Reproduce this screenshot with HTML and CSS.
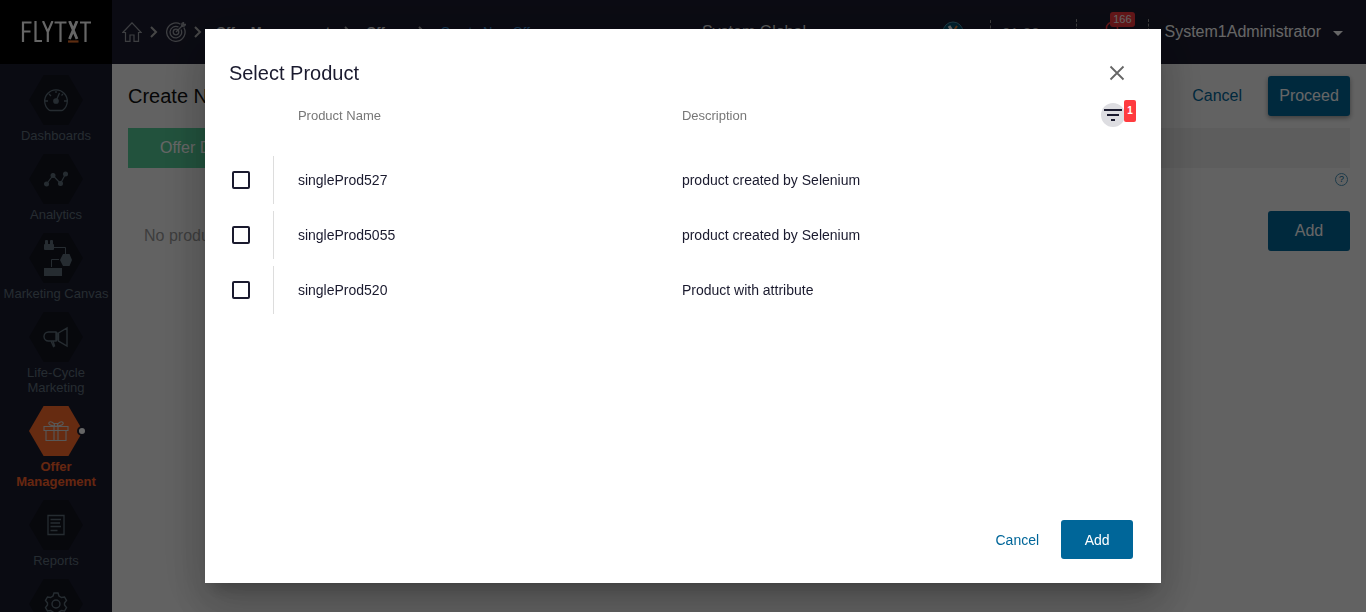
FILE: index.html
```
<!DOCTYPE html>
<html lang="en">
<head>
<meta charset="utf-8">
<meta name="viewport" content="width=device-width, initial-scale=1">
<title>Create New Offer</title>
<link rel="stylesheet" href="styles.css">
</head>
<body>
<div class="app">
  <aside class="sidebar">
    <a class="logo" href="#" aria-label="Flytxt">
      <svg width="70" height="22" viewBox="0 0 70 22" fill="none" stroke="currentColor" stroke-width="2.200">
        <path d="M2 21V1.500H10.500M2 10.500H9.500M14.500 0V20H21M22 0L26.800 11L31.500 0M26.800 11V21M33.500 1.500H45.500M39.500 1.500V21M59 1.500H70M64.500 1.500V21"/>
        <path d="M48.500 0L56 18M56 0L48.500 18" stroke-width="2.800"/>
        <path class="logo-bar" d="M47 20.500H57.500"/>
      </svg>
    </a>
    <nav class="menu">
      <a class="item" href="#"><span class="hex"><svg width="26" height="26" viewBox="0 0 26 26" fill="none" stroke="currentColor" stroke-width="1.300"><path d="M6 23A11.300 11.300 0 1 1 20 23Q19.500 23.500 18.500 23.500H7.500Q6.500 23.500 6 23ZM13 14L16.500 6M2 14H5M21 14H24M6 7L8 9M20 7L18.500 8.500M13 4V6"/><circle cx="13" cy="14" r="2.200" fill="currentColor"/></svg></span><span class="label">Dashboards</span></a>
      <a class="item" href="#"><span class="hex"><svg width="26" height="26" viewBox="0 0 26 26" fill="none" stroke="currentColor" stroke-width="1.200"><path d="M3.500 18L10 9.500L17.500 17.500L22.500 8"/><g fill="currentColor"><circle cx="3.500" cy="18" r="1.900"/><circle cx="10" cy="9.500" r="1.900"/><circle cx="17.500" cy="17.500" r="1.900"/><circle cx="22.500" cy="8" r="1.900"/></g></svg></span><span class="label">Analytics</span></a>
      <a class="item" href="#"><span class="hex"><svg width="32" height="38" viewBox="0 0 32 38" fill="none" stroke="currentColor" stroke-width="1"><path d="M13 8.500H25.500V15M19 20.500H11.500V28"/><g fill="currentColor" stroke="none"><rect x="4" y="5" width="10" height="6" rx="1"/><rect x="5" y="1" width="3" height="5" rx="1"/><rect x="10" y="1" width="3" height="5" rx="1"/><path d="M23 15H29.500L32 21L29.500 27H23L20 21Z"/><rect x="4" y="29" width="18" height="8"/></g></svg></span><span class="label">Marketing Canvas</span></a>
      <a class="item" href="#"><span class="hex"><svg width="26" height="22" viewBox="0 0 26 22" fill="none" stroke="currentColor" stroke-width="1.400"><path d="M13 6V15H5.500A4.500 4.500 0 0 1 5.500 6H13L14 7V14L13 15M15.500 7L24 2V20L15.500 15ZM8 15L10.500 20.500L11.500 20L10 15"/></svg></span><span class="label">Life-Cycle Marketing</span></a>
      <a class="item active" href="#"><span class="hex"><svg width="26" height="22" viewBox="0 0 26 22" fill="none" stroke="currentColor" stroke-width="1.100"><path d="M1 6.500H25V10.500H1ZM3 10.500V20.500H23V10.500M11 6.500V20.500M15 6.500V20.500M12 6C7 6 5 4 6 2.500C7.500 1 11 2 12 6ZM14 6C19 6 21 4 20 2.500C18.500 1 15 2 14 6ZM11 3.500H15"/></svg></span><span class="dot"></span><span class="label">Offer Management</span></a>
      <a class="item" href="#"><span class="hex"><svg width="18" height="22" viewBox="0 0 18 22" fill="none" stroke="currentColor" stroke-width="1.300"><path d="M1 1.500H17V20.500H1ZM3.500 5.500H14M3.500 9H13M3.500 12.500H14M3.500 16.500H10.500"/></svg></span><span class="label">Reports</span></a>
      <a class="item" href="#" aria-label="Settings"><span class="hex"><svg width="26" height="26" viewBox="0 0 26 26" fill="none" stroke="currentColor" stroke-width="1.400"><path d="M11 2H15L16 5L18.500 6.500L21.500 6L23.500 9.500L21.500 12V14L23.500 16.500L21.500 20L18.500 19.500L16 21L15 24H11L10 21L7.500 19.500L4.500 20L2.500 16.500L4.500 14V12L2.500 9.500L4.500 6L7.500 6.500L10 5Z"/><circle cx="13" cy="13" r="4"/></svg></span></a>
    </nav>
  </aside>
  <div class="page">
    <header class="topbar">
      <nav class="crumbs" aria-label="Breadcrumb">
        <a href="#" aria-label="Home"><svg width="20" height="20" viewBox="0 0 20 20" fill="none" stroke="currentColor" stroke-width="1.200"><path d="M.8 10.500L10 .8L19.200 10.500H16.500V19.300H12V13H8V19.300H3.500V10.500Z"/></svg></a>
        <svg class="chev" width="8" height="12" viewBox="0 0 8 12" fill="none" stroke="currentColor" stroke-width="2"><path d="M1 1L6 6L1 11"/></svg>
        <a href="#" aria-label="Campaigns"><svg width="20" height="20" viewBox="0 0 20 20" fill="none" stroke="currentColor" stroke-width="1.300"><path d="M14.500 2.200A9.200 9.200 0 1 0 17.800 5.500M12.500 5A5.800 5.800 0 1 0 15 7.500M10 10L18 2M15.500 4.500L16 1.500L17.500 .5V2.500H19.500L18.500 4L15.500 4.500"/><circle cx="10" cy="10" r="2.800"/></svg></a>
        <svg class="chev" width="8" height="12" viewBox="0 0 8 12" fill="none" stroke="currentColor" stroke-width="2"><path d="M1 1L6 6L1 11"/></svg>
        <a class="crumb" href="#">Offer Management</a>
        <svg class="chev" width="8" height="12" viewBox="0 0 8 12" fill="none" stroke="currentColor" stroke-width="2"><path d="M1 1L6 6L1 11"/></svg>
        <a class="crumb" href="#">Offers</a>
        <svg class="chev" width="8" height="12" viewBox="0 0 8 12" fill="none" stroke="currentColor" stroke-width="2"><path d="M1 1L6 6L1 11"/></svg>
        <a class="crumb current" href="#">Create New Offer</a>
      </nav>
      <div class="tools">
        <span class="tenant">System Global</span>
        <svg class="brand" width="22" height="22" viewBox="0 0 22 22"><circle cx="11" cy="11" r="10" fill="#00506e" stroke="#4a8fa8"/><path d="M7 5L15 17" stroke="#fff" stroke-width="3"/><path d="M15 5L7 17" stroke="#e8803c" stroke-width="2"/></svg>
        <span class="clock">01:20</span>
        <button class="bell" aria-label="Alerts"><svg width="20" height="20" viewBox="0 0 20 20" fill="none" stroke="currentColor" stroke-width="1.500"><path d="M1 14.500L3.500 12V6A5.500 5.500 0 0 1 14.500 6V12L17 14.500Z"/></svg><span class="count">166</span></button>
        <button class="user">System1Administrator<span class="caret"></span></button>
      </div>
    </header>
    <main class="content">
      <div class="title-row">
        <h1>Create New Offer</h1>
        <button class="btn text">Cancel</button>
        <button class="btn solid raised">Proceed</button>
      </div>
      <div class="steps"><button class="step">Offer Details</button></div>
      <div class="help-row"><button class="help" aria-label="Help">?</button></div>
      <div class="products"><p>No products added</p><button class="btn solid">Add</button></div>
    </main>
  </div>
</div>
<div class="overlay">
  <section class="dialog" role="dialog" aria-modal="true" aria-labelledby="dialog-title">
    <header class="dialog-head">
      <h2 id="dialog-title">Select Product</h2>
      <button class="close" aria-label="Close"><svg width="16" height="16" viewBox="0 0 16 16" fill="none" stroke="currentColor" stroke-width="1.800"><path d="M1.500 1.500L14.500 14.500M14.500 1.500L1.500 14.500"/></svg></button>
    </header>
    <div class="dialog-body">
      <table class="list">
        <colgroup><col class="col-check"><col class="col-name"><col><col class="col-filter"></colgroup>
        <thead>
          <tr><th></th><th scope="col">Product Name</th><th scope="col">Description</th><th><button class="filter" aria-label="Filter"><svg width="18" height="12" viewBox="0 0 18 12" fill="currentColor"><path d="M0 0H18V2H0ZM3 5H15V7H3ZM7 10H11V12H7Z"/></svg><span class="filter-count">1</span></button></th></tr>
        </thead>
        <tbody>
          <tr><td><div class="check"><input type="checkbox" id="p1"></div></td><td><label for="p1">singleProd527</label></td><td colspan="2">product created by Selenium</td></tr>
          <tr><td><div class="check"><input type="checkbox" id="p2"></div></td><td><label for="p2">singleProd5055</label></td><td colspan="2">product created by Selenium</td></tr>
          <tr><td><div class="check"><input type="checkbox" id="p3"></div></td><td><label for="p3">singleProd520</label></td><td colspan="2">Product with attribute</td></tr>
        </tbody>
      </table>
    </div>
    <footer class="dialog-foot">
      <button class="btn small text">Cancel</button>
      <button class="btn small solid">Add</button>
    </footer>
  </section>
</div>
</body>
</html>
```
FILE: styles.css
```
* { box-sizing: border-box; }
body { margin: 0; overflow: hidden; font-family: "Liberation Sans", Arial, sans-serif; font-size: 14px; color: #1a1a2e; }
button { font: inherit; border: 0; padding: 0; background: none; color: inherit; cursor: pointer; }
a { color: inherit; text-decoration: none; }
h1, h2, p { margin: 0; font-weight: 400; }
svg { display: block; }

.app { display: flex; height: 100vh; overflow: hidden; background: #f5f5f5; }
.sidebar { flex: 0 0 112px; background: #1b1c2f; overflow: hidden; }
.logo { display: flex; height: 64px; align-items: center; justify-content: center; background: #000; color: #fff; }
.logo-bar { stroke: #e8702c; }
.menu { display: flex; flex-direction: column; gap: 8px; padding-top: 11px; }
.item { position: relative; display: flex; flex-direction: column; align-items: center; color: #5f6f7c; text-align: center; font-size: 13px; line-height: 15px; }
.hex { display: flex; width: 54px; height: 50px; align-items: center; justify-content: center; background: #12151f; clip-path: polygon(27% 0, 73% 0, 100% 50%, 73% 100%, 27% 100%, 0 50%); }
.label { max-width: 110px; padding: 3px 0; }
.item:nth-child(4) .label, .item.active .label { width: 90px; }
.item.active { color: #ff6329; font-weight: 700; }
.item.active .hex { background: #ff6c2c; color: #ddd; }
.dot { position: absolute; top: 20px; left: 77px; width: 10px; height: 10px; border: 2px solid #1b1c2f; border-radius: 50%; background: #fff; }

.page { flex: 1; min-width: 0; }
.topbar { display: flex; height: 64px; align-items: center; justify-content: space-between; padding: 0 23px 0 10px; background: #1c1d30; color: #fff; }
.crumbs { display: flex; align-items: center; color: #9a9ca4; }
.chev { margin: 0 8px; color: #b0b0b0; }
.crumb { margin: 0 6px; font-size: 13px; line-height: 16px; font-weight: 700; white-space: nowrap; color: #ddd; }
.crumb.current { font-weight: 400; color: #3f8fd0; }
.tools { display: flex; align-items: center; font-size: 16px; }
.tenant { margin-right: 136px; color: #ddd; }
.clock { margin-left: 26px; padding: 4px 36px 4px 11px; border-left: 1px dashed #999; color: #bbb; font-size: 15px; }
.bell { position: relative; height: 26px; padding: 0 25px 0 26px; border: 1px dashed #999; border-width: 0 1px; color: #fa3a3f; }
.count { position: absolute; top: -7px; right: 13px; padding: 0 3px; border-radius: 3px; background: #fa3a3f; color: #fff; font-size: 11px; line-height: 15px; }
.user { display: flex; align-items: center; margin-left: 16px; }
.caret { margin: 3px 0 0 12px; border: 5px solid transparent; border-top-color: #fff; border-bottom: 0; }

.content { padding: 12px 16px; }
.title-row { display: flex; height: 40px; align-items: center; gap: 18px; }
.title-row h1 { flex: 1; font-size: 20px; color: #111; }
.btn { min-width: 82px; height: 40px; padding: 0 8px; border-radius: 3px; font-size: 16px; }
.text { min-width: 0; color: #069; }
.solid { background: #069; color: #fff; }
.raised { box-shadow: 0 2px 5px rgba(0, 0, 0, .4); }
.small { height: 39px; font-size: 14px; }
.small.solid { min-width: 72px; }
.steps { height: 40px; margin-top: 12px; background: #e8e8e8; }
.step { height: 40px; padding: 0 32px; background: #55cd99; color: #fff; font-size: 16px; }
.help-row { display: flex; justify-content: flex-end; padding: 5px 2px 0; }
.help { width: 13px; height: 13px; border: 1px solid #4c94b8; border-radius: 50%; color: #069; font-size: 9px; line-height: 11px; }
.products { display: flex; justify-content: space-between; align-items: center; padding: 25px 0 0 16px; color: #999; font-size: 16px; }
.products p { padding-top: 9px; }

.overlay { position: fixed; inset: 0; display: flex; align-items: center; justify-content: center; background: rgba(0, 0, 0, .6); }
.dialog { display: flex; flex-direction: column; width: 70%; background: #fff; box-shadow: 0 11px 15px -7px rgba(0, 0, 0, .2), 0 24px 38px 3px rgba(0, 0, 0, .14), 0 9px 46px 8px rgba(0, 0, 0, .12); }
.dialog-head { display: flex; align-items: center; justify-content: space-between; padding: 32px 36px 8px 24px; }
.dialog-head h2 { font-size: 20px; line-height: 24px; }
.close { color: #666; }
.dialog-body { min-height: 427px; padding: 0 24px; }
.list { width: 100%; table-layout: fixed; border-spacing: 0; }
.col-check { width: 69px; }
.col-name { width: 384px; }
.col-filter { width: 40px; }
.list th { height: 44px; padding: 0; text-align: left; font-size: 13px; font-weight: 400; color: #777; }
.list tbody::before { content: ""; display: table-row; height: 15px; }
.list td { height: 55px; padding: 0; }
.check { display: flex; align-items: center; width: 45px; height: 48px; padding-left: 3px; border-right: 1px solid #ddd; }
.check input { appearance: none; width: 18px; height: 18px; margin: 0; border: 2px solid #1a1a2e; border-radius: 2px; background: #fff; }
.filter { position: relative; display: flex; width: 24px; height: 24px; margin-left: 4px; align-items: center; justify-content: center; border-radius: 50%; background: #dddde1; color: #1a1a2e; }
.filter-count { position: absolute; top: -3px; left: 23px; width: 12px; border-radius: 2px; background: #ff3b3f; color: #fff; font-size: 10px; font-weight: 700; line-height: 22px; }
.dialog-foot { display: flex; justify-content: flex-end; gap: 14px; padding: 0 28px 24px; }
```
